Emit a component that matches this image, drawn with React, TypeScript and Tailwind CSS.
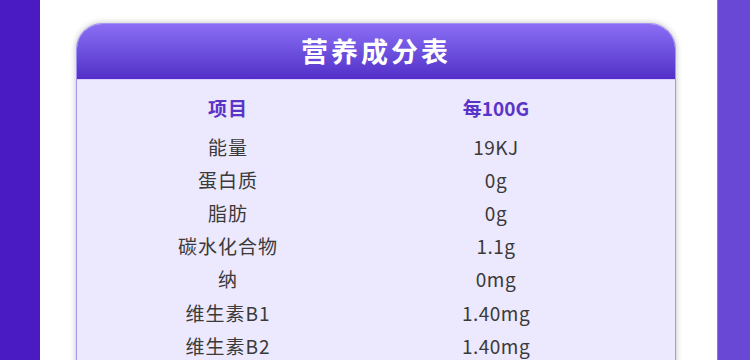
const rows: [string, string][] = [
  ["能量", "19KJ"],
  ["蛋白质", "0g"],
  ["脂肪", "0g"],
  ["碳水化合物", "1.1g"],
  ["纳", "0mg"],
  ["维生素B1", "1.40mg"],
  ["维生素B2", "1.40mg"],
];

export default function App() {
  return (
    <div
      className="flex h-[360px] w-[750px] overflow-hidden bg-white"
      style={{ fontFamily: '"Noto Sans CJK SC", "Noto Sans", sans-serif' }}
    >
      <div className="w-[40px] shrink-0 bg-[#4a1bc3]" />
      <div className="flex-1 pl-[36px] pr-[41px] pt-[23px]">
        <div className="h-[360px] overflow-hidden rounded-t-[26px] border border-[#a294f2] bg-[#ece8fd] shadow-[0_0_6px_rgba(0,0,0,0.25)]">
          <div className="flex h-[56px] items-center justify-center bg-gradient-to-b from-[#8b6ef4] to-[#532ec8] border-b border-[#d8d0fb]">
            <h1 className="text-[27px] font-bold tracking-[3px] text-white">营养成分表</h1>
          </div>
          <div className="pt-[14px] text-[19px] text-[#3a3a3a]">
            <div className="grid h-[35.5px] grid-cols-[302px_234px] items-start font-bold text-[#5a34c8]">
              <div className="text-center tracking-[1px]">项目</div>
              <div className="text-center">每100G</div>
            </div>
            {rows.map(([name, value]) => (
              <div
                key={name}
                className="grid h-[33.2px] grid-cols-[302px_234px] items-center leading-none"
              >
                <div className="text-center tracking-[1px]">{name}</div>
                <div className="text-center tracking-[0.5px]">{value}</div>
              </div>
            ))}
          </div>
        </div>
      </div>
      <div className="w-[33px] shrink-0 border-l border-[#8a7fb0] bg-[#6848d5]" />
    </div>
  );
}
